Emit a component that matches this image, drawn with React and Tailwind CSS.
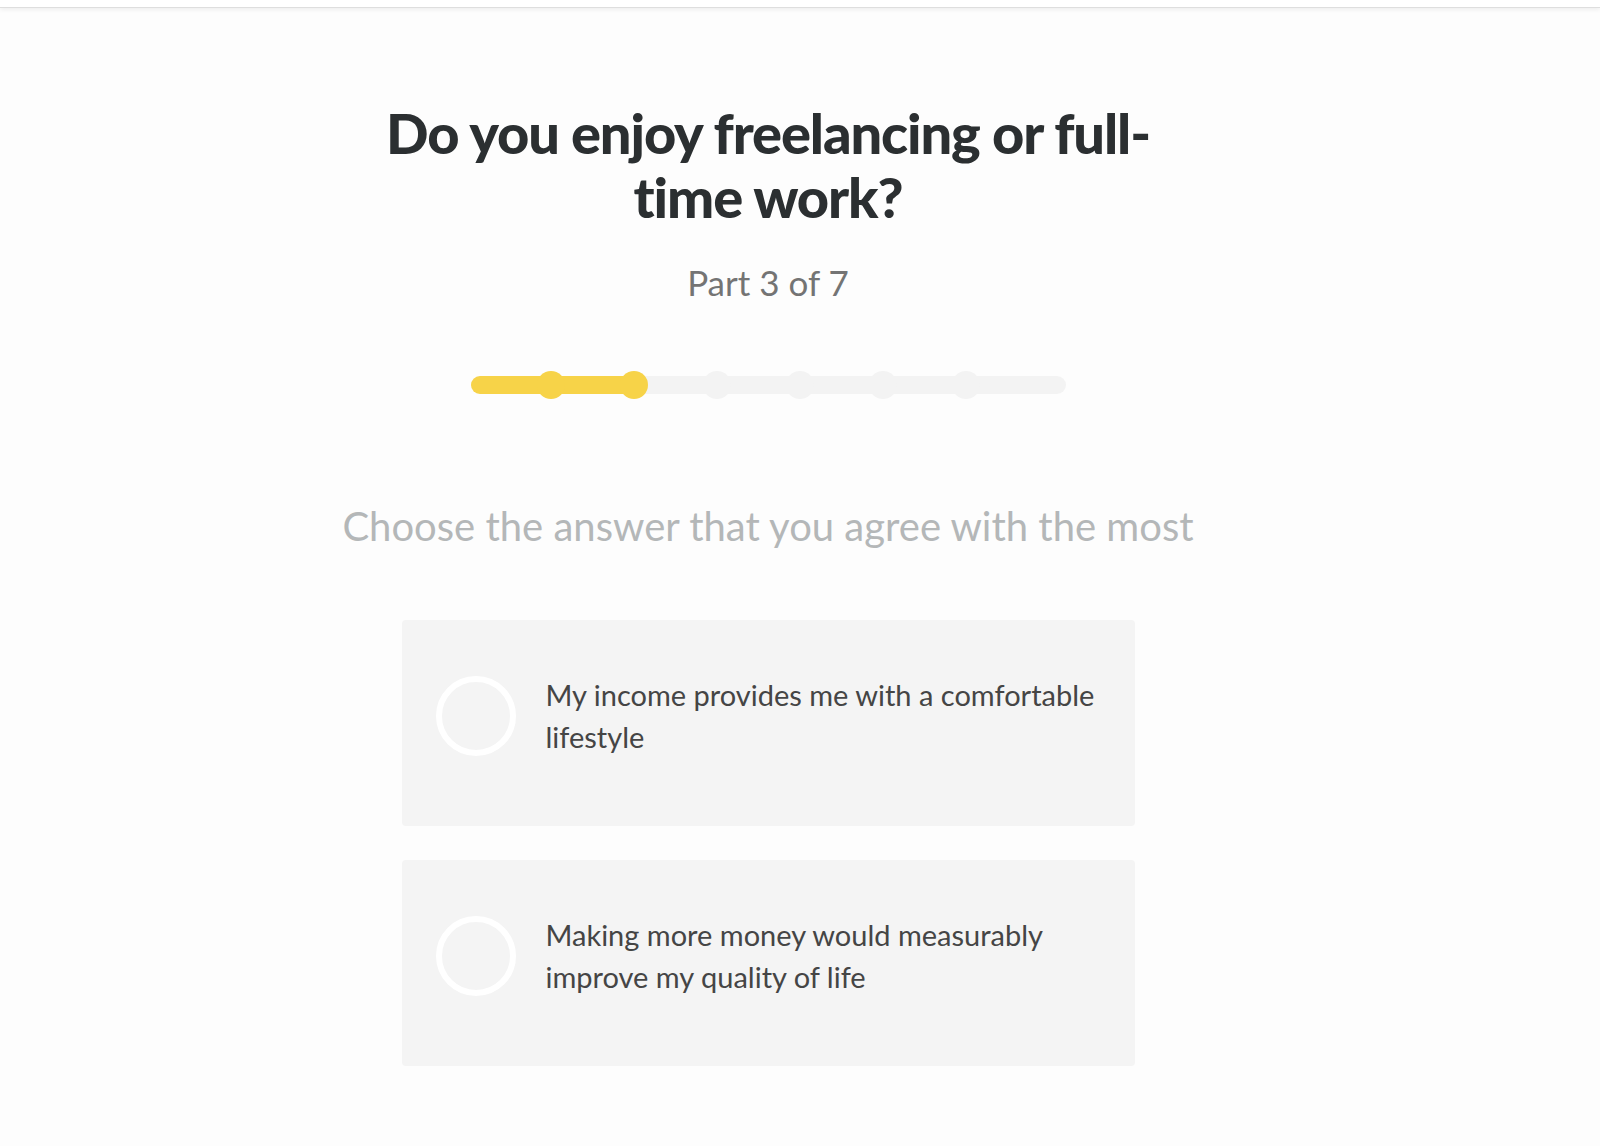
import { useState } from "react";

const answers = [
  "My income provides me with a comfortable lifestyle",
  "Making more money would measurably improve my quality of life",
];

// centres of the step dots, measured from the left edge of the track
const dots = [80, 163, 246, 329, 412, 495];

function Progress({ step }) {
  return (
    <div className="relative mt-[69px] h-[28px] w-[595px]">
      <div className="absolute left-0 right-0 top-[5px] h-[18px] rounded-full bg-[#f3f3f3]" />
      <div
        className="absolute left-0 top-[5px] h-[18px] rounded-full bg-[#f7d348]"
        style={{ width: dots[step - 2] }}
      />
      {dots.map((x, i) => (
        <div
          key={x}
          className={
            i < step - 1
              ? "absolute top-0 h-[28px] w-[28px] -translate-x-1/2 rounded-full bg-[#f7d348]"
              : "absolute top-0 h-[28px] w-[28px] -translate-x-1/2 rounded-full bg-[#f3f3f3]"
          }
          style={{ left: x }}
        />
      ))}
    </div>
  );
}

function Answer({ text, selected, onClick }) {
  return (
    <button
      onClick={onClick}
      className="flex h-[206px] w-[733px] items-center gap-[30px] rounded-[4px] bg-[#f4f4f4] pl-[34px] pr-[30px] text-left"
    >
      <span
        className={
          selected
            ? "-mt-[14px] h-[80px] w-[80px] shrink-0 rounded-full border-[6px] border-[#f7d348] bg-white"
            : "-mt-[14px] h-[80px] w-[80px] shrink-0 rounded-full border-[6px] border-white"
        }
      />
      <span className="-mt-[14px] text-[29px] leading-[42px] text-[#454545]">{text}</span>
    </button>
  );
}

export default function App() {
  const [picked, setPicked] = useState(null);

  return (
    <div className="min-h-screen bg-[#fdfdfd] font-['Lato',sans-serif]">
      <div className="h-[8px] border-b border-[#dedede] bg-white shadow-[0_2px_4px_rgba(0,0,0,0.06)]" />
      <div className="flex flex-col items-center pr-[64px]">
        <h1 className="mt-[93px] max-w-[800px] text-center text-[56px] font-black leading-[64px] tracking-[-0.02em] text-[#2b2f31]">
          Do you enjoy freelancing or full-time work?
        </h1>
        <p className="mt-[33px] text-[35px] leading-[40px] text-[#747474]">Part 3 of 7</p>
        <Progress step={3} />
        <p className="mt-[103px] text-[40px] leading-[48px] text-[#b4b7b8]">
          Choose the answer that you agree with the most
        </p>
        <div className="mt-[70px] mb-[80px] flex flex-col gap-[34px]">
          {answers.map((a, i) => (
            <Answer key={a} text={a} selected={picked === i} onClick={() => setPicked(i)} />
          ))}
        </div>
      </div>
    </div>
  );
}
